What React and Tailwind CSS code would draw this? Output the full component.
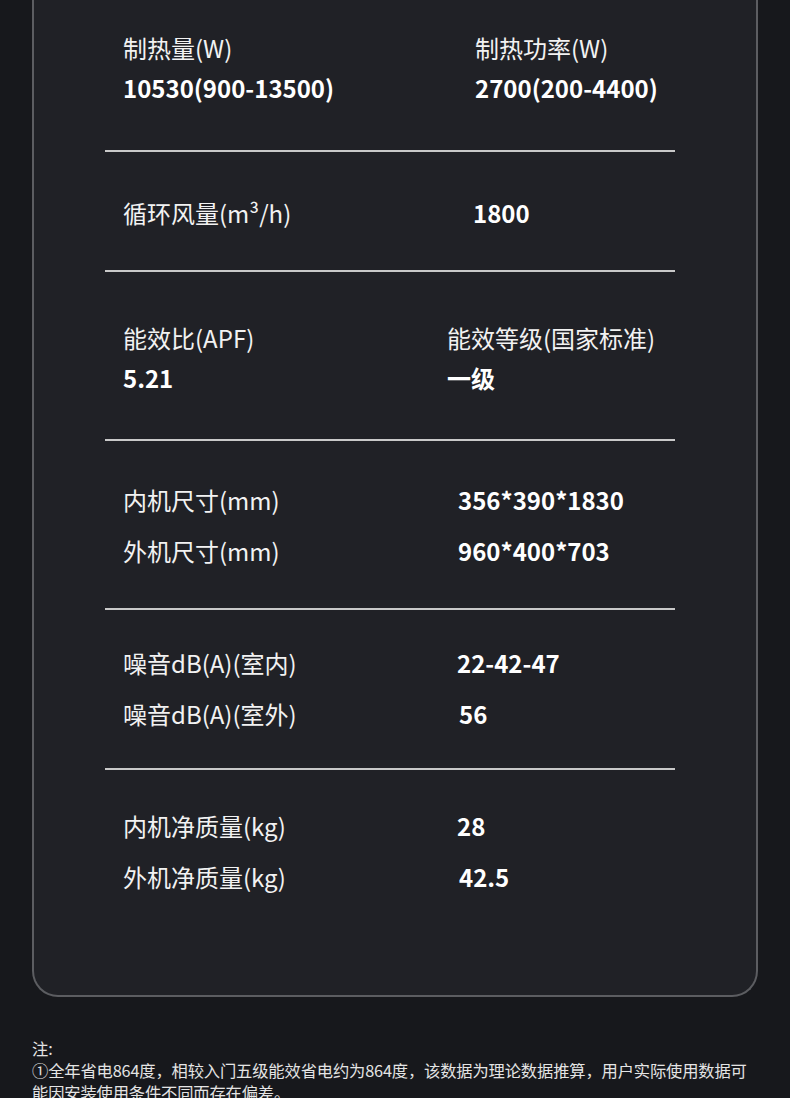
const font = { fontFamily: '"Noto Sans CJK SC", "Noto Sans", sans-serif' }

function Divider() {
  return <div className="ml-[71px] w-[570px] h-[2px] bg-[#c9c9c9]" />
}

function Label({ children }) {
  return <p className="text-[24px] leading-[40px] text-[#f2f2f2] whitespace-nowrap">{children}</p>
}

function Value({ children }) {
  return <p className="text-[24px] leading-[40px] font-bold text-white whitespace-nowrap">{children}</p>
}

export default function App() {
  return (
    <div className="w-[790px] h-[1098px] overflow-hidden bg-[#17181c]" style={font}>
      <div className="mx-[32px] border-x-2 border-b-2 border-[#5c5d61] rounded-b-[26px] bg-[#202126] h-[997px] flex flex-col">

        {/* 制热 */}
        <div className="flex pt-[28px] pb-[42px]">
          <div className="w-[441px] pl-[89px] shrink-0">
            <Label>制热量(W)</Label>
            <Value>10530(900-13500)</Value>
          </div>
          <div>
            <Label>制热功率(W)</Label>
            <Value>2700(200-4400)</Value>
          </div>
        </div>
        <Divider />

        {/* 风量 */}
        <div className="flex pt-[41px] pb-[37px]">
          <div className="w-[439px] pl-[89px] shrink-0"><Label>循环风量(m³/h)</Label></div>
          <Value>1800</Value>
        </div>
        <Divider />

        {/* 能效 */}
        <div className="flex pt-[46px] pb-[41px]">
          <div className="w-[413px] pl-[89px] shrink-0">
            <Label>能效比(APF)</Label>
            <Value>5.21</Value>
          </div>
          <div>
            <Label>能效等级(国家标准)</Label>
            <Value>一级</Value>
          </div>
        </div>
        <Divider />

        {/* 尺寸 */}
        <div className="flex flex-col gap-[11px] pt-[39px] pb-[37px]">
          <div className="flex">
            <div className="w-[424px] pl-[89px] shrink-0"><Label>内机尺寸(mm)</Label></div>
            <Value>356*390*1830</Value>
          </div>
          <div className="flex">
            <div className="w-[424px] pl-[89px] shrink-0"><Label>外机尺寸(mm)</Label></div>
            <Value>960*400*703</Value>
          </div>
        </div>
        <Divider />

        {/* 噪音 */}
        <div className="flex flex-col gap-[11px] pt-[33px] pb-[34px]">
          <div className="flex">
            <div className="w-[423px] pl-[89px] shrink-0"><Label>噪音dB(A)(室内)</Label></div>
            <Value>22-42-47</Value>
          </div>
          <div className="flex">
            <div className="w-[425px] pl-[89px] shrink-0"><Label>噪音dB(A)(室外)</Label></div>
            <Value>56</Value>
          </div>
        </div>
        <Divider />

        {/* 重量 */}
        <div className="flex flex-col gap-[11px] pt-[36px]">
          <div className="flex">
            <div className="w-[423px] pl-[89px] shrink-0"><Label>内机净质量(kg)</Label></div>
            <Value>28</Value>
          </div>
          <div className="flex">
            <div className="w-[425px] pl-[89px] shrink-0"><Label>外机净质量(kg)</Label></div>
            <Value>42.5</Value>
          </div>
        </div>
      </div>

      <div className="pl-[32px] pr-[30px] pt-[40px] text-[16.3px] tracking-[-0.15px] leading-[22px] text-[#e4e4e4]">
        <p>注:</p>
        <p>①全年省电864度，相较入门五级能效省电约为864度，该数据为理论数据推算，用户实际使用数据可能因安装使用条件不同而存在偏差。</p>
      </div>
    </div>
  )
}
